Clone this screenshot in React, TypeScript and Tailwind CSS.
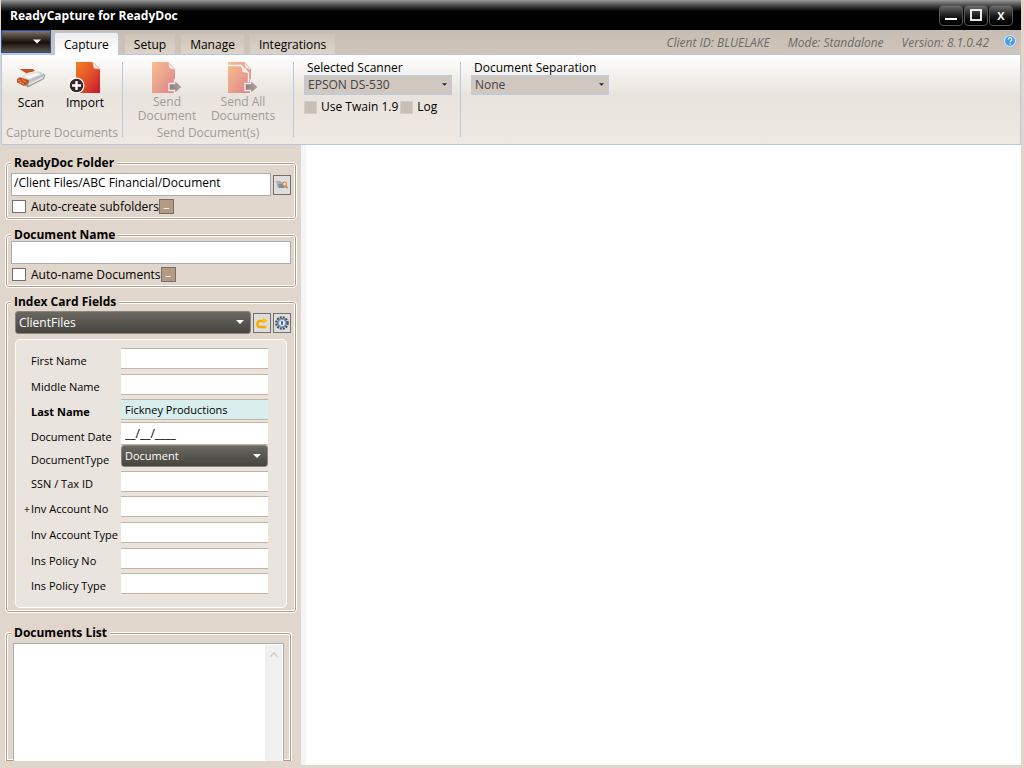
import { useState } from "react";
import type { ReactNode } from "react";
import clsx from "clsx";

const TABS = ["Capture", "Setup", "Manage", "Integrations"];

type Field = {
  id: string;
  label: string;
  row: string;
  value?: string;
  required?: boolean;
  searchable?: boolean;
  kind?: "text" | "date" | "select";
};

const FIELDS: Field[] = [
  { id: "first-name", label: "First Name", row: "h-[26px]" },
  { id: "middle-name", label: "Middle Name", row: "h-[25px]" },
  { id: "last-name", label: "Last Name", row: "h-[23px]", value: "Fickney Productions", required: true },
  { id: "document-date", label: "Document Date", row: "h-[23px]", value: "__/__/____", kind: "date" },
  { id: "document-type", label: "DocumentType", row: "h-[26px]", value: "Document", kind: "select" },
  { id: "ssn", label: "SSN / Tax ID", row: "h-[25px]" },
  { id: "inv-account-no", label: "Inv Account No", row: "h-[26px]", searchable: true },
  { id: "inv-account-type", label: "Inv Account Type", row: "h-[26px]" },
  { id: "ins-policy-no", label: "Ins Policy No", row: "h-[25px]" },
  { id: "ins-policy-type", label: "Ins Policy Type", row: "h-[26px]" },
];

function ScanIcon() {
  return (
    <svg viewBox="0 0 30 22" className="h-[22px] w-[30px]">
      <defs>
        <linearGradient id="scan-body" x1="0" y1="0" x2="1" y2="1">
          <stop offset="0" stopColor="#ececec" />
          <stop offset="0.5" stopColor="#d6d6d6" />
          <stop offset="1" stopColor="#a0a0a0" />
        </linearGradient>
      </defs>
      <path d="M2 14 L12 20.500 L28 12 L29.500 8 L24 5 L2 11 Z" fill="#9a9a9a" />
      <path d="M7 8 L22 4.500 L29 7 L13 14 L5 11 Z" fill="url(#scan-body)" />
      <path d="M13 14 L29 7.500 L27 11.500 L12 19 Z" fill="#c6c6c6" />
      <path d="M13 17.500 L27 10.500" stroke="#f5f5f5" strokeWidth="1" />
      <path d="M8 9 L21 6 L25 7 L13 12 Z" fill="#f7f7f7" />
      <path d="M3 2 L17 2 L19 4 L10 6.500 Z" fill="#c9501f" />
      <path d="M3 2 L10 6.500 L22 4.500" fill="none" stroke="#f6e3d8" strokeWidth="0.800" />
      <path d="M1 12 L4 10.500 L13 13 L12 16.500 L8 19 L1 15.500 Z" fill="#c4511f" />
      <path d="M2 13 L5 14.500 M6 12.500 L10 15 M3 15.500 L8 16.500" stroke="#ec9465" strokeWidth="0.900" />
    </svg>
  );
}

function ImportIcon() {
  return (
    <svg viewBox="0 0 32 32" className="h-8 w-8">
      <defs>
        <linearGradient id="import-page" x1="0" y1="0" x2="1" y2="1">
          <stop offset="0" stopColor="#f58220" />
          <stop offset="0.5" stopColor="#e2502a" />
          <stop offset="1" stopColor="#c4162c" />
        </linearGradient>
      </defs>
      <path d="M7 0 H23.500 L31 7 V31 H7 Z" fill="url(#import-page)" />
      <path d="M23.500 0 L31 7 L25 6.500 Z" fill="#fbeee8" stroke="#e8a792" strokeWidth="0.6" />
      <circle cx="7.500" cy="23.500" r="8" fill="#fff" />
      <circle cx="7.500" cy="23.500" r="6.800" fill="#3a2226" />
      <path d="M7.500 19 V28 M3 23.500 H12" stroke="#fff" strokeWidth="2.400" />
    </svg>
  );
}

function SendIcon({ stacked = false }: { stacked?: boolean }) {
  return (
    <svg viewBox="0 0 32 32" className="h-8 w-8">
      <defs>
        <linearGradient id="send-page" x1="0" y1="0" x2="1" y2="1">
          <stop offset="0" stopColor="#f8bd8c" />
          <stop offset="0.5" stopColor="#eaa28e" />
          <stop offset="1" stopColor="#d9818c" />
        </linearGradient>
        <linearGradient id="send-arrow" x1="0" y1="0" x2="1" y2="0">
          <stop offset="0" stopColor="#8c7d7e" />
          <stop offset="1" stopColor="#b3a6a5" />
        </linearGradient>
      </defs>
      <path d="M1 0 H17 L24 7.500 V31 H1 Z" fill="url(#send-page)" />
      <path d="M17 0 L24 7.500 L18.500 6.500 Z" fill="#f8eee9" stroke="#dfaea2" strokeWidth="0.6" />
      {stacked && (
        <>
          <path d="M1 3.500 H14 L21.500 11 V20" fill="none" stroke="#fdf5f0" strokeWidth="1.400" />
          <path d="M14 3.500 L21 11 L15.500 10 Z" fill="#f8eee9" />
        </>
      )}
      <path
        d="M18 21.500 H23.500 V18 L31.500 25 L23.500 32 V28.500 H18 Z"
        fill="url(#send-arrow)"
        stroke="#f3ebe6"
        strokeWidth="1.400"
      />
    </svg>
  );
}

function FolderSearchIcon() {
  return (
    <svg viewBox="0 0 12 9" className="h-[9px] w-3">
      <path d="M0 1 H4 L5 2 H9 V3 L10 8 H2 Z" fill="#a9aeb2" />
      <path d="M2 4 H9 L8 8 H3 Z" fill="#858d92" />
      <circle cx="8.500" cy="4" r="2" fill="#e9dccf" stroke="#e07a2a" strokeWidth="1" />
      <path d="M10 5.800 L11.600 8.200" stroke="#d9691e" strokeWidth="1.200" />
    </svg>
  );
}

function RedoIcon() {
  return (
    <svg viewBox="0 0 14 12" className="h-3 w-3.5">
      <path
        d="M11.500 10 H5 Q2.500 10 2.500 7.500 V6.500 Q2.500 4 5 4 H9"
        fill="none"
        stroke="#f5ae08"
        strokeWidth="2.600"
      />
      <path d="M8 0.500 L13 3.800 L8 6.500 Z" fill="#fbc21a" />
    </svg>
  );
}

function GearIcon() {
  return (
    <svg viewBox="0 0 14 14" className="h-3.5 w-3.5">
      <circle cx="7" cy="7" r="5.800" fill="none" stroke="#4a525c" strokeWidth="2" strokeDasharray="2 1.040" />
      <circle cx="7" cy="7" r="5" fill="#656d77" />
      <circle cx="7" cy="7" r="3.600" fill="#e3edf7" stroke="#7ba6d1" strokeWidth="1.200" />
      <rect x="6" y="5" width="2" height="4" rx="1" fill="#3b6ea3" />
    </svg>
  );
}

function Arrow({ className }: { className?: string }) {
  return (
    <svg viewBox="0 0 8 4" className={clsx("pointer-events-none", className)}>
      <path d="M0 0 H8 L4 4 Z" fill="currentColor" />
    </svg>
  );
}

function WindowButton({ label, children }: { label: string; children: ReactNode }) {
  return (
    <button
      aria-label={label}
      className="flex h-[21px] w-6 items-center justify-center rounded-sm border border-[#555] bg-linear-to-b from-[#6e6e6e] via-[#2c2c2c] via-40% to-black text-white"
    >
      {children}
    </button>
  );
}

function RibbonGroup({ title, className, children }: { title?: string; className?: string; children: ReactNode }) {
  return (
    <div className={clsx("flex flex-col border-r border-[#b9c9db]", className)}>
      <div className="flex flex-1 items-start">{children}</div>
      {title && <div className="text-center leading-[8px] whitespace-nowrap text-[#a09d99]">{title}</div>}
    </div>
  );
}

function RibbonSelect({ id, label, value, className }: { id: string; label: string; value: string; className?: string }) {
  return (
    <div className={className}>
      <label htmlFor={id} className="mb-px block px-[3px] leading-[12px]">
        {label}
      </label>
      <div className="relative">
        <select
          id={id}
          defaultValue={value}
          className="block h-5 w-full appearance-none border border-[#bccbdc] bg-[#d0c7c0] px-[3px] text-[#444]"
        >
          <option>{value}</option>
        </select>
        <Arrow className="absolute top-2 right-[5px] h-[3px] w-[5px] text-[#222]" />
      </div>
    </div>
  );
}

function DarkSelect({ id, value, label, className }: { id: string; value: string; label?: string; className?: string }) {
  return (
    <div className={clsx("relative", className)}>
      <select
        id={id}
        aria-label={label}
        defaultValue={value}
        className="block h-full w-full appearance-none rounded-[3px] border border-[#8a857f] bg-linear-to-b from-[#6b6862] to-[#474540] px-[3px] text-white"
      >
        <option>{value}</option>
      </select>
      <Arrow className="absolute top-[9px] right-[7px] h-1 w-2 text-white" />
    </div>
  );
}

function GroupBox({ title, className, children }: { title: string; className?: string; children: ReactNode }) {
  return (
    <fieldset
      className={clsx(
        "min-w-0 rounded-[4px] border border-white px-[5px] shadow-[inset_0_0_0_1px_#b39a84,inset_0_0_0_2px_#fff]",
        className
      )}
    >
      <legend className="bg-[#e0d6cb] px-[3px] pt-px leading-[13px] font-bold">{title}</legend>
      {children}
    </fieldset>
  );
}

function AutoOption({ id, label }: { id: string; label: string }) {
  return (
    <div className="mt-[3px] flex h-[15px] items-center">
      <input
        id={id}
        type="checkbox"
        className="ml-px h-[13px] w-[14px] appearance-none border border-[#707070] bg-white checked:bg-[#b39a84]"
      />
      <label htmlFor={id} className="ml-[5px]">
        {label}
      </label>
      <button
        aria-label={`${label} options`}
        className="flex h-[15px] w-[15px] items-end justify-center border border-[#707070] bg-[#b39a80] pb-1 leading-none text-white"
      >
        _
      </button>
    </div>
  );
}

function SmallButton({ label, children }: { label: string; children: ReactNode }) {
  return (
    <button
      aria-label={label}
      className="flex h-5 w-[18px] shrink-0 items-center justify-center border border-[#707070] bg-[#dddddd]"
    >
      {children}
    </button>
  );
}

function FieldRow({ field }: { field: Field }) {
  const { id, label, row, value, required, searchable, kind = "text" } = field;

  return (
    <div className={clsx("flex items-start text-[11px]", row)}>
      <span className="w-[9px] pt-1.5 text-right leading-[14px]">{searchable && "+"}</span>
      <label
        htmlFor={id}
        className={clsx(
          "w-[91px] pl-px leading-[14px] whitespace-nowrap",
          kind === "text" ? "pt-1.5" : "pt-2",
          required && "font-bold"
        )}
      >
        {label}
      </label>
      {kind === "select" ? (
        <DarkSelect id={id} value={value ?? ""} className="h-[22px] flex-1" />
      ) : (
        <input
          id={id}
          type="text"
          defaultValue={value}
          className={clsx(
            "min-w-0 flex-1 border-y border-[#c4b3a3] px-1",
            kind === "date" ? "h-[23px] text-[12px]" : "h-[21px]",
            required ? "bg-[#d9efed]" : "bg-white"
          )}
        />
      )}
    </div>
  );
}

function Sidebar() {
  return (
    <aside className="flex w-[300px] shrink-0 flex-col pt-2.5 pr-1 pl-1">
      <GroupBox title="ReadyDoc Folder" className="pt-1 pb-[5px]">
        <div className="flex items-center gap-0.5">
          <input
            type="text"
            aria-label="ReadyDoc Folder"
            defaultValue="/Client Files/ABC Financial/Document"
            className="h-[23px] min-w-0 flex-1 border border-[#abadb3] bg-white px-0.5 pb-1"
          />
          <SmallButton label="Browse folders">
            <FolderSearchIcon />
          </SmallButton>
        </div>
        <AutoOption id="auto-subfolders" label="Auto-create subfolders" />
      </GroupBox>

      <GroupBox title="Document Name" className="mt-[7px] pb-[5px]">
        <input
          type="text"
          aria-label="Document Name"
          className="block h-[23px] w-full border border-[#abadb3] bg-white px-0.5"
        />
        <AutoOption id="auto-name" label="Auto-name Documents" />
      </GroupBox>

      <GroupBox title="Index Card Fields" className="mt-1.5 pt-[3px] pb-1">
        <div className="flex items-center gap-0.5 pl-1">
          <DarkSelect id="card" label="Index card" value="ClientFiles" className="h-[23px] flex-1" />
          <SmallButton label="Reset fields">
            <RedoIcon />
          </SmallButton>
          <SmallButton label="Field settings">
            <GearIcon />
          </SmallButton>
        </div>
        <div className="mt-[5px] mr-1 ml-1 rounded-[5px] border border-white bg-[#e9e4dd] py-2 pr-[18px] pl-[5px]">
          {FIELDS.map((field) => (
            <FieldRow key={field.id} field={field} />
          ))}
        </div>
      </GroupBox>

      <div className="mt-3 flex flex-1 flex-col pr-[5px] pb-1">
        <GroupBox title="Documents List" className="flex-1 rounded-b-none border-b-0 pt-1">
          <div className="mr-0.5 ml-0.5 flex h-full min-h-[117px] justify-end border border-b-0 border-[#abadb3] bg-white p-px pb-0">
            <div className="flex w-[17px] justify-center bg-[#f0f0f0] pt-[7px]">
              <svg viewBox="0 0 8 5" className="h-[5px] w-2">
                <path d="M0.500 4.500 L4 1 L7.500 4.500" fill="none" stroke="#c9c9c9" strokeWidth="1.300" />
              </svg>
            </div>
          </div>
        </GroupBox>
      </div>
    </aside>
  );
}

export default function App() {
  const [activeTab, setActiveTab] = useState("Capture");

  return (
    <div className="flex min-h-screen flex-col bg-[#e0d6cb] pr-[3px] pb-[3px] pl-px font-['Open_Sans','Noto_Sans',sans-serif] text-[12px] text-black">
      {/* Title bar */}
      <header className="flex h-[30px] items-center bg-linear-to-b from-[#999] via-black via-45% to-black pr-2 pl-[9px] text-white">
        <h1 className="flex-1 pt-0.5 font-bold">ReadyCapture for ReadyDoc</h1>
        <div className="flex gap-px">
          <WindowButton label="Minimize">
            <svg viewBox="0 0 12 12" className="h-3 w-3">
              <path d="M0 10 H12" stroke="#fff" strokeWidth="2" />
            </svg>
          </WindowButton>
          <WindowButton label="Maximize">
            <svg viewBox="0 0 12 12" className="h-3 w-3">
              <rect x="1" y="1" width="10" height="10" fill="none" stroke="#fff" strokeWidth="1.800" />
            </svg>
          </WindowButton>
          <WindowButton label="Close">
            <span className="text-[11px] leading-none font-bold">X</span>
          </WindowButton>
        </div>
      </header>

      {/* Tab strip */}
      <div className="flex h-6 items-end bg-linear-to-b from-[#c7bdb3] to-[#cfc5ba]">
        <button
          aria-label="Application menu"
          className="flex h-[23px] w-[50px] items-center justify-end self-start border border-[#1f4fae] bg-linear-to-b from-[#7d7771] via-[#1b1108] via-55% to-[#5a5550] pr-[9px]"
        >
          <Arrow className="h-[5px] w-2 text-white" />
        </button>
        <nav className="ml-[3px] flex items-end gap-1.5">
          {TABS.map((tab) => (
            <button
              key={tab}
              onClick={() => setActiveTab(tab)}
              className={clsx(
                "px-[9px]",
                tab === activeTab
                  ? "relative -mb-px h-[23px] rounded-t-[3px] border border-b-0 border-[#b5c7dc] bg-linear-to-b from-[#f0eeec] to-white pt-0.5"
                  : "h-5 bg-linear-to-b from-[#cdc3b9] to-[#ddd4c9] pt-0.5"
              )}
            >
              {tab}
            </button>
          ))}
        </nav>
        <div className="ml-auto flex items-center gap-[18px] pb-0.5 text-[#6b6b6b] italic">
          <span>Client ID: BLUELAKE</span>
          <span>Mode: Standalone</span>
          <span>Version: 8.1.0.42</span>
        </div>
        <button aria-label="Help" className="mr-1 mb-1.5 ml-3.5">
          <svg viewBox="0 0 14 14" className="h-3.5 w-3.5">
            <circle cx="7" cy="7" r="6.300" fill="#e6edf5" stroke="#9fb2c6" strokeWidth="0.700" />
            <circle cx="7" cy="7" r="5" fill="#4a9be6" />
            <path
              d="M5.200 5.500 A1.800 1.800 0 1 1 7.800 7 Q7 7.400 7 8.300 M7 9.300 V10.500"
              fill="none"
              stroke="#fff"
              strokeWidth="1.100"
            />
          </svg>
        </button>
      </div>

      {/* Ribbon */}
      <div className="flex h-[91px] items-stretch border border-[#b5c7dc] bg-linear-to-b from-white via-[#e8e3dc] via-45% to-[#eee9e2] pt-[7px] pb-[7px]">
        <RibbonGroup title="Capture Documents" className="w-[121px]">
          <button className="flex w-[58px] flex-col items-center">
            <span className="flex h-8 items-center">
              <ScanIcon />
            </span>
            <span className="mt-px leading-4">Scan</span>
          </button>
          <button className="flex w-[50px] flex-col items-center">
            <ImportIcon />
            <span className="mt-px leading-4">Import</span>
          </button>
        </RibbonGroup>
        <RibbonGroup title="Send Document(s)" className="w-[171px]">
          <button disabled className="ml-1.5 flex w-[76px] flex-col items-center text-[#a09d99]">
            <SendIcon />
            <span className="mt-px leading-[14px]">
              Send
              <br />
              Document
            </span>
          </button>
          <button disabled className="flex w-[76px] flex-col items-center text-[#a09d99]">
            <SendIcon stacked />
            <span className="mt-px leading-[14px]">
              Send All
              <br />
              Documents
            </span>
          </button>
        </RibbonGroup>
        <RibbonGroup className="w-[167px] pl-2.5">
          <div>
            <RibbonSelect id="scanner" label="Selected Scanner" value="EPSON DS-530" className="w-[148px]" />
            <div className="mt-1 flex items-center">
              <input
                id="twain"
                type="checkbox"
                className="h-[13px] w-[13px] appearance-none border border-[#d3cdc6] bg-[#c8bfb6]"
              />
              <label htmlFor="twain" className="ml-1 leading-4">
                Use Twain 1.9
              </label>
              <input
                id="log"
                type="checkbox"
                className="ml-0.5 h-[13px] w-[13px] appearance-none border border-[#d3cdc6] bg-[#c8bfb6]"
              />
              <label htmlFor="log" className="ml-1 leading-4">
                Log
              </label>
            </div>
          </div>
        </RibbonGroup>
        <RibbonSelect id="separation" label="Document Separation" value="None" className="ml-2.5 w-[138px]" />
      </div>

      {/* Work area */}
      <div className="flex flex-1">
        <Sidebar />
        <main className="flex-1 border-l-[5px] border-[#f5f5f5] bg-white" />
      </div>
    </div>
  );
}
